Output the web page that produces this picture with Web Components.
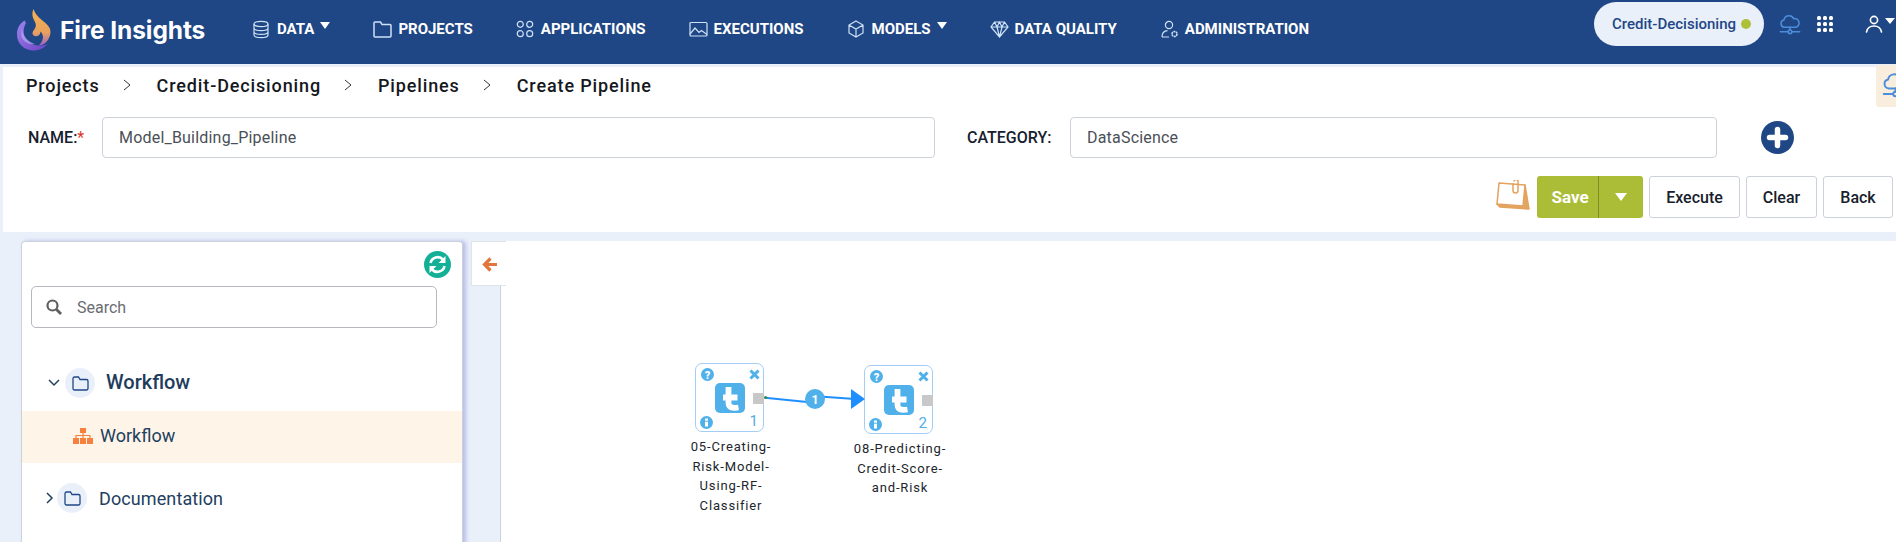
<!DOCTYPE html>
<html>
<head>
<meta charset="utf-8">
<title>Create Pipeline</title>
<style>
  html, body { margin: 0; height: 542px; overflow: hidden; background: #e9f0fa; font-family: Roboto, "Liberation Sans", sans-serif; }
</style>
</head>
<body>
<fi-app></fi-app>
<script>
const CLOUD = `<svg viewBox="0 0 24 24" width="22" height="22" fill="none" stroke="currentColor" stroke-width="1.700" stroke-linecap="round"><path d="M7 15.500H6a4 4 0 0 1-.6-7.900A5.600 5.600 0 0 1 16 6.200a4.700 4.700 0 0 1 2.200 9.300H7z"/><path d="M12 15.500v3M1.500 20.500h8M14.500 20.500h8"/><circle cx="12" cy="20.500" r="2"/></svg>`
const ICONS = {
    data: `<ellipse cx="9" cy="4" rx="7" ry="2.600"/><path d="M2 4v11c0 1.500 3 2.600 7 2.600s7-1.100 7-2.600V4M2 8c0 1.500 3 2.600 7 2.600s7-1.100 7-2.600M2 11.800c0 1.500 3 2.600 7 2.600s7-1.100 7-2.600"/>`,
    projects: `<path stroke-width="1.500" d="M1 4.500V16a1 1 0 0 0 1 1h15a1 1 0 0 0 1-1V5.500a1 1 0 0 0-1-1H9L7.500 2H2a1 1 0 0 0-1 1v1.500z"/>`,
    apps: `<circle cx="4.300" cy="4.300" r="3"/><circle cx="13.700" cy="4.300" r="3"/><circle cx="4.300" cy="13.700" r="3"/><circle cx="13.700" cy="13.700" r="3"/>`,
    exec: `<rect x="1" y="2.500" width="17" height="13.500" rx="1"/><path d="M1 14l5-6 4 4.500 2.500-2 5.500 4"/>`,
    models: `<path d="M9 1l7 4v8l-7 4-7-4V5zM2 5l7 4 7-4M9 9v8"/>`,
    quality: `<path d="M4.500 2h10L18 7l-8.500 10L1 7zM1 7h17M7 7l2.500 10L12 7M4.500 2L7 7l2.500-5 2.500 5 2.500-5"/>`,
    admin: `<circle cx="9" cy="5" r="3.600"/><path d="M2 17c0-3.500 2-6 5.500-6.300M2 17h7"/><circle cx="14.500" cy="14" r="2.500" stroke-dasharray="2 .6" stroke-width="1.600"/>`
}

class FiNavItem extends HTMLElement {
    constructor() {
        super()
        const icon = ICONS[this.getAttribute('icon')] ?? ''
        const caret = this.hasAttribute('caret') ? '<span class="caret"></span>' : ''
        this.attachShadow({mode: 'open'}).innerHTML = `
            <style>
                :host { display: flex; align-items: center; height: 20px; color: #fff; font: 700 15px Roboto, sans-serif; white-space: nowrap; }
                svg { fill: none; stroke: #cfe2f7; stroke-width: 1.200; margin-right: 6px; flex: none; }
                .caret { width: 0; height: 0; margin: -7px 0 0 6px; border: 5.500px solid transparent; border-top: 7px solid #fff; border-bottom: 0; }
            </style>
            <svg viewBox="0 0 19 19" width="19" height="19">${icon}</svg><slot></slot>${caret}
        `
    }
}
customElements.define('fi-nav-item', FiNavItem)

const navTemplate = document.createElement('template')
navTemplate.innerHTML = `
    <style>
        :host { display: flex; align-items: flex-start; height: 64px; background: #1f4785; position: relative; }
        .logo { display: flex; align-items: center; width: 188px; margin: 9px 47px 0 17px; color: #fff; font: 700 24.500px Inter, sans-serif; letter-spacing: -.1px; white-space: nowrap; height: 42px; }
        .logo svg { margin-right: 9px; flex: none; }
        .items { display: flex; gap: 43px; margin-top: 19px; }
        .right { margin-left: auto; display: flex; align-items: center; height: 64px; color: #fff; }
        .pill { display: flex; align-items: center; justify-content: flex-end; box-sizing: border-box; width: 170px; height: 44px; margin: -16px 0 0; padding-right: 13px; border-radius: 22px; background: #e9f0fa; color: #1f4785; font: 500 15px Roboto, sans-serif; white-space: nowrap; }
        .dot { width: 10px; height: 10px; border-radius: 50%; background: #aebf38; margin-left: 5px; }
        .cloud { color: #4c8ddb; display: flex; margin: -16px 0 0 15px; }
        .apps { margin: -16px 0 0 16px; display: grid; grid-template-columns: repeat(3, 4px); gap: 2px; }
        .apps i { width: 4px; height: 4px; border-radius: 1.500px; background: #fff; }
        .user { display: flex; margin: -16px 0 0 32px; }
        .caret { width: 0; height: 0; margin: -16px 1px 0 2px; border: 5px solid transparent; border-top: 6px solid #fff; border-bottom: 0; transform: translateY(-3px); }
    </style>
    <div class="logo">
        <svg viewBox="0 0 34 42" width="34" height="42">
            <defs>
                <linearGradient id="o" x1="0" y1="0" x2="0" y2="1"><stop offset="0" stop-color="#f6b350"/><stop offset=".65" stop-color="#e9a05e"/><stop offset="1" stop-color="#9a63c8"/></linearGradient>
                <linearGradient id="p" x1="0" y1="0" x2="1" y2="1"><stop offset="0" stop-color="#9d84ee"/><stop offset="1" stop-color="#6d43c4"/></linearGradient>
            </defs>
            <path fill="url(#o)" d="M16.500 0c-2 5-1 8.500 1.500 13 1.500 2.700 1 5.500-1 8-2 2-2 5 .5 6 3 1 6-1 6-4.500 4 4 3 10-2 14 6 0 12-6 12-14C33.500 14 20 11 16.500 0z"/>
            <path fill="url(#p)" d="M7.500 11.500C2 15 0 20 0 25.500 0 35 7.500 41.500 16.500 41.500c6 0 11-2.500 14-7-5 3.500-15 3-20.500-3C5 26 6.500 18 9 14c-.5-1-1-1.800-1.500-2.500z"/>
            <path fill="#b7a4f2" opacity=".75" d="M5 19c.5 7 5 13.500 13 16-6 1-11-2-13.500-7-.5-3 0-6 .5-9z"/>
        </svg>
        <span>Fire Insights</span>
    </div>
    <div class="items"><slot></slot></div>
    <div class="right">
        <div class="pill">Credit-Decisioning<span class="dot"></span></div>
        <span class="cloud">${CLOUD}</span>
        <div class="apps"><i></i><i></i><i></i><i></i><i></i><i></i><i></i><i></i><i></i></div>
        <svg class="user" viewBox="0 0 18 18" width="18" height="18" fill="none" stroke="#fff" stroke-width="1.600" stroke-linecap="round"><circle cx="9" cy="5" r="3.600"/><path d="M1.500 17c.8-4 3.500-6 7.500-6s6.700 2 7.500 6"/></svg>
        <span class="caret"></span>
    </div>
`
class FiNav extends HTMLElement {
    constructor() {
        super()
        this.attachShadow({mode: 'open'}).appendChild(navTemplate.content.cloneNode(true))
    }
}
customElements.define('fi-nav', FiNav)

class FiField extends HTMLElement {
    constructor() {
        super()
        const req = this.hasAttribute('required') ? '<b>*</b>' : ''
        this.attachShadow({mode: 'open'}).innerHTML = `
            <style>
                :host { display: flex; align-items: center; }
                label { font: 500 16px Roboto, sans-serif; color: #16202e; white-space: nowrap; width: var(--label-w); }
                b { color: #e0342c; font-weight: 400; }
                .input { box-sizing: border-box; height: 41px; width: var(--input-w); border: 1px solid #ccd1da; border-radius: 4px; padding: 0 16px; display: flex; align-items: center; font: 400 16px Roboto, sans-serif; letter-spacing: .2px; color: #4a4f57; }
            </style>
            <label>${this.getAttribute('label')}${req}</label>
            <div class="input"><slot></slot></div>
        `
    }
}
customElements.define('fi-field', FiField)

class FiButton extends HTMLElement {
    constructor() {
        super()
        this.attachShadow({mode: 'open'}).innerHTML = `
            <style>
                :host { display: flex; align-items: center; justify-content: center; box-sizing: border-box; height: 42px; border: 1px solid #ccd1da; border-radius: 3px; background: #fff; color: #17202c; font: 500 16px Roboto, sans-serif; }
            </style>
            <slot></slot>
        `
    }
}
customElements.define('fi-button', FiButton)

const headerTemplate = document.createElement('template')
headerTemplate.innerHTML = `
    <style>
        :host { display: block; box-sizing: border-box; height: 165px; margin: 3px 0 0 3px; background: #fff; position: relative; }
        .crumbs { display: flex; align-items: center; height: 36px; padding-left: 23px; font: 500 18px Roboto, sans-serif; letter-spacing: .87px; color: #15181d; white-space: nowrap; }
        .crumbs svg { margin: 0 26px 0 23px; flex: none; }
        .form { display: flex; align-items: center; margin-top: 14px; padding-left: 25px; }
        .form fi-field:first-child { --label-w: 74px; --input-w: 833px; }
        .form fi-field:nth-child(2) { --label-w: 103px; --input-w: 647px; margin-left: 32px; }
        .plus { margin-left: 44px; flex: none; }
        .actions { display: flex; align-items: center; justify-content: flex-end; gap: 6px; margin-top: 18px; padding-right: 3px; }
        .note { margin-right: 1px; }
        .save { display: flex; box-sizing: border-box; width: 106px; height: 42px; border-radius: 3px; background: #abbd37; color: #fff; font: 700 17px Roboto, sans-serif; }
        .save span { width: 62px; padding-left: 5px; box-sizing: border-box; display: flex; align-items: center; justify-content: center; border-right: 1px solid #7f8f25; }
        .save i { flex: 1; display: flex; align-items: center; justify-content: center; }
        .save i::after { content: ""; border: 6px solid transparent; border-top: 8px solid #fff; border-bottom: 0; }
        .flag { position: absolute; right: 0; top: -2px; width: 20px; height: 42px; overflow: hidden; border-radius: 3px 0 0 3px; background: #f9eedd; color: #4c8ddb; padding-top: 6px; box-sizing: border-box; }
        .flag svg { margin-left: 6px; display: block; width: 27px; height: 27px; }
    </style>
    <div class="crumbs">
        <span>Projects</span><svg width="8" height="12" viewBox="0 0 8 12" fill="none" stroke="#333" stroke-width="1"><path d="M1 1l6 5-6 5"/></svg>
        <span>Credit-Decisioning</span><svg width="8" height="12" viewBox="0 0 8 12" fill="none" stroke="#333" stroke-width="1"><path d="M1 1l6 5-6 5"/></svg>
        <span>Pipelines</span><svg width="8" height="12" viewBox="0 0 8 12" fill="none" stroke="#333" stroke-width="1"><path d="M1 1l6 5-6 5"/></svg>
        <span>Create Pipeline</span>
    </div>
    <div class="form">
        <fi-field label="NAME:" required>Model_Building_Pipeline</fi-field>
        <fi-field label="CATEGORY:">DataScience</fi-field>
        <svg class="plus" width="33" height="33" viewBox="0 0 33 33"><circle cx="16.500" cy="16.500" r="16.500" fill="#1f4785"/><path d="M16.500 8.500v16M8.500 16.500h16" stroke="#fff" stroke-width="5.500" stroke-linecap="round"/></svg>
    </div>
    <div class="actions">
        <svg class="note" width="34" height="34" viewBox="0 0 34 34" fill="none" stroke="#e3a25f" stroke-width="1.500" stroke-linejoin="round"><path d="M29 5l4 24-29-2-3-3z" fill="#e3a65f"/><path d="M3 3l26 2-2 21-26-2z" fill="#fff"/><path d="M17 3v7.500a2.500 2.500 0 0 0 5 0V1.500a2 2 0 0 0-4 0" stroke-width="1.500"/></svg>
        <div class="save"><span>Save</span><i></i></div>
        <fi-button style="width:91px">Execute</fi-button>
        <fi-button style="width:71px">Clear</fi-button>
        <fi-button style="width:70px">Back</fi-button>
    </div>
    <div class="flag">${CLOUD}</div>
`
class FiHeader extends HTMLElement {
    constructor() {
        super()
        this.attachShadow({mode: 'open'}).appendChild(headerTemplate.content.cloneNode(true))
    }
}
customElements.define('fi-header', FiHeader)

const FOLDER = `<svg width="17" height="15" viewBox="0 0 17 15" fill="none" stroke="#1f4785" stroke-width="1.300"><path d="M1 3.500V12.500a1.500 1.500 0 0 0 1.500 1.500h12a1.500 1.500 0 0 0 1.500-1.500V5a1.500 1.500 0 0 0-1.500-1.500H8L6.500 1H2.500A1.500 1.500 0 0 0 1 2.500z"/></svg>`
const treeTemplate = document.createElement('template')
treeTemplate.innerHTML = `
    <style>
        :host { display: block; box-sizing: border-box; width: 442px; height: 320px; background: #fff; border: 1px solid #ccd1da; border-bottom: 0; border-radius: 4px 4px 0 0; box-shadow: 3px 0 4px #b9bde6; position: relative; color: #22405f; }
        .refresh { position: absolute; left: 402px; top: 9px; }
        .search { box-sizing: border-box; width: 406px; height: 42px; margin: 44px 0 0 9px; border: 1px solid #b5b8bd; border-radius: 5px; display: flex; align-items: center; padding-left: 14px; font: 400 16px Roboto, sans-serif; color: #6a6d72; }
        .search svg { margin-right: 15px; }
        .row { display: flex; align-items: center; }
        .disc { width: 30px; height: 30px; border-radius: 50%; background: #e9f0fa; display: flex; align-items: center; justify-content: center; flex: none; }
        .open { margin-top: 40px; height: 30px; padding-left: 26px; }
        .open .disc { margin: 0 11px 0 5px; }
        .open span:last-child { font: 500 20px Roboto, sans-serif; color: #1e3c5c; margin-top: -2px; }
        .active { box-sizing: border-box; margin-top: 13px; height: 52px; padding: 0 0 3px 51px; background: #fef5e8; font: 400 18px Roboto, sans-serif; }
        .active svg { margin-right: 7px; }
        .closed { margin-top: 20px; height: 30px; padding-left: 24px; font: 400 18px Roboto, sans-serif; letter-spacing: .1px; }
        .closed .disc { margin: 0 12px 0 3px; }
    </style>
    <svg class="refresh" width="27" height="27" viewBox="0 0 27 27"><circle cx="13.500" cy="13.500" r="13.500" fill="#12b096"/><g fill="none" stroke="#fff" stroke-width="2.600"><path d="M6.500 12a7.300 7.300 0 0 1 12.500-3.500M20.500 15a7.300 7.300 0 0 1-12.500 3.500"/></g><path fill="#fff" d="M21.500 5v7h-7zM5.500 22v-7h7z"/></svg>
    <div class="search">
        <svg width="16" height="16" viewBox="0 0 16 16" fill="none" stroke="#5f5f5f" stroke-width="2.200"><circle cx="6.500" cy="6.500" r="5"/><path d="M10.500 10.500l4.500 4.500" stroke-width="2.800"/></svg>
        <span>Search</span>
    </div>
    <div class="row open">
        <svg width="12" height="8" viewBox="0 0 12 8" fill="none" stroke="#22405f" stroke-width="1.500"><path d="M1 1l5 5 5-5"/></svg>
        <span class="disc">${FOLDER}</span><span>Workflow</span>
    </div>
    <div class="row active">
        <svg width="20" height="16" viewBox="0 0 20 16" fill="#f6813f"><rect x="7" y="0" width="6" height="5"/><rect x="0" y="10" width="6" height="6"/><rect x="7" y="10" width="6" height="6"/><rect x="14" y="10" width="6" height="6"/><path d="M3 10V7.500h14V10M10 5v5" fill="none" stroke="#f6813f" stroke-width="1.200"/></svg>
        <span>Workflow</span>
    </div>
    <div class="row closed">
        <svg width="8" height="12" viewBox="0 0 8 12" fill="none" stroke="#22405f" stroke-width="1.500"><path d="M1 1l5 5-5 5"/></svg>
        <span class="disc">${FOLDER}</span><span>Documentation</span>
    </div>
`
class FiTree extends HTMLElement {
    constructor() {
        super()
        this.attachShadow({mode: 'open'}).appendChild(treeTemplate.content.cloneNode(true))
    }
}
customElements.define('fi-tree', FiTree)

class FiNode extends HTMLElement {
    constructor() {
        super()
        this.attachShadow({mode: 'open'}).innerHTML = `
            <style>
                :host { display: block; position: absolute; width: 69px; left: ${this.getAttribute('x')}px; top: ${this.getAttribute('y')}px; }
                .box { box-sizing: border-box; width: 69px; height: 69px; border: 1.500px solid #a5cdf5; border-radius: 7px; background: #fff; position: relative; }
                svg { position: absolute; }
                .port { position: absolute; left: 57px; top: 29px; width: 11px; height: 11px; background: #c8c8c8; }
                .num { position: absolute; right: 5px; bottom: 1px; font: 400 15px Roboto, sans-serif; color: #52ade8; }
                .label { position: absolute; top: 74px; left: -12px; width: 96px; text-align: center; font: 400 13px/19.700px Roboto, sans-serif; letter-spacing: .85px; color: #22262c; }
            </style>
            <div class="box">
                <svg style="left:5px;top:4px" width="13" height="13" viewBox="0 0 13 13"><circle cx="6.500" cy="6.500" r="6.500" fill="#4fb0ea"/><text x="6.500" y="10.500" text-anchor="middle" font-family="Roboto" font-weight="900" font-size="11" fill="#fff">?</text></svg>
                <svg style="left:53px;top:5px" width="11" height="11" viewBox="0 0 11 11"><path d="M1.500 1.500l8 8M9.500 1.500l-8 8" stroke="#4fb0ea" stroke-width="3"/></svg>
                <svg style="left:4px;top:52px" width="13" height="13" viewBox="0 0 13 13"><circle cx="6.500" cy="6.500" r="6.500" fill="#4fb0ea"/><rect x="5" y="2.500" width="3" height="2.200" fill="#fff"/><rect x="5" y="5.700" width="3" height="4.800" fill="#fff"/></svg>
                <svg style="left:18.500px;top:18.500px" width="30" height="30" viewBox="0 0 30 30"><rect width="30" height="30" rx="5" fill="#4fb0ea"/><path d="M13.500 4v15.500c0 5 3.500 6 10 5M8 14.500h14.500" fill="none" stroke="#fff" stroke-width="5.800"/></svg>
                <span class="port"></span>
                <span class="num">${this.getAttribute('num')}</span>
            </div>
            <div class="label"><slot></slot></div>
        `
    }
}
customElements.define('fi-node', FiNode)

const canvasTemplate = document.createElement('template')
canvasTemplate.innerHTML = `
    <style>
        :host { display: block; flex: 1; height: 301px; position: relative; }
        .tab { position: absolute; left: 0; top: 0; z-index: 1; box-sizing: border-box; width: 35px; height: 45px; background: #fff; border: 1px solid #dfe3ea; border-right: 0; display: flex; align-items: center; padding: 2px 0 0 10px; }
        .sheet { position: absolute; left: 29px; right: 0; top: 0; bottom: 0; background: #fff; border-left: 1px solid #ccd3e0; }
        .wire { position: absolute; left: 0; top: 0; }
    </style>
    <div class="tab">
        <svg width="15" height="15" viewBox="0 0 15 15" fill="none" stroke="#e0763c" stroke-width="3.200"><path d="M15 7.500H3M8.500 1.500L2.500 7.500l6 6"/></svg>
    </div>
    <div class="sheet"></div>
    <slot></slot>
    <svg class="wire" width="420" height="200" viewBox="0 0 420 200">
        <path d="M294 156.700L336 161M352 155.800L384 158" fill="none" stroke="#1f8fff" stroke-width="2"/>
        <path d="M394 158L380 148V168z" fill="#1f8fff"/>
        <circle cx="294.500" cy="156.500" r="1.500" fill="#2a8a4a"/>
        <circle cx="344" cy="158" r="10" fill="#4fb0ea"/>
        <text x="344" y="162.500" text-anchor="middle" font-family="Roboto" font-weight="700" font-size="12.500" fill="#fff">1</text>
    </svg>
`
class FiCanvas extends HTMLElement {
    constructor() {
        super()
        this.attachShadow({mode: 'open'}).appendChild(canvasTemplate.content.cloneNode(true))
    }
}
customElements.define('fi-canvas', FiCanvas)

const appTemplate = document.createElement('template')
appTemplate.innerHTML = `
    <style>
        :host { display: block; }
        .work { display: flex; gap: 8px; padding: 9px 0 0 21px; }
    </style>
    <fi-nav>
        <fi-nav-item icon="data" caret>DATA</fi-nav-item>
        <fi-nav-item icon="projects">PROJECTS</fi-nav-item>
        <fi-nav-item icon="apps">APPLICATIONS</fi-nav-item>
        <fi-nav-item icon="exec">EXECUTIONS</fi-nav-item>
        <fi-nav-item icon="models" caret>MODELS</fi-nav-item>
        <fi-nav-item icon="quality">DATA QUALITY</fi-nav-item>
        <fi-nav-item icon="admin">ADMINISTRATION</fi-nav-item>
    </fi-nav>
    <fi-header></fi-header>
    <div class="work">
        <fi-tree></fi-tree>
        <fi-canvas>
            <fi-node num="1" x="224" y="122">05-Creating-Risk-Model-Using-RF-Classifier</fi-node>
            <fi-node num="2" x="393" y="124">08-Predicting-Credit-Score-and-Risk</fi-node>
        </fi-canvas>
    </div>
`
class FiApp extends HTMLElement {
    constructor() {
        super()
        this.attachShadow({mode: 'open'}).appendChild(appTemplate.content.cloneNode(true))
    }
}
customElements.define('fi-app', FiApp)
</script>
</body>
</html>
